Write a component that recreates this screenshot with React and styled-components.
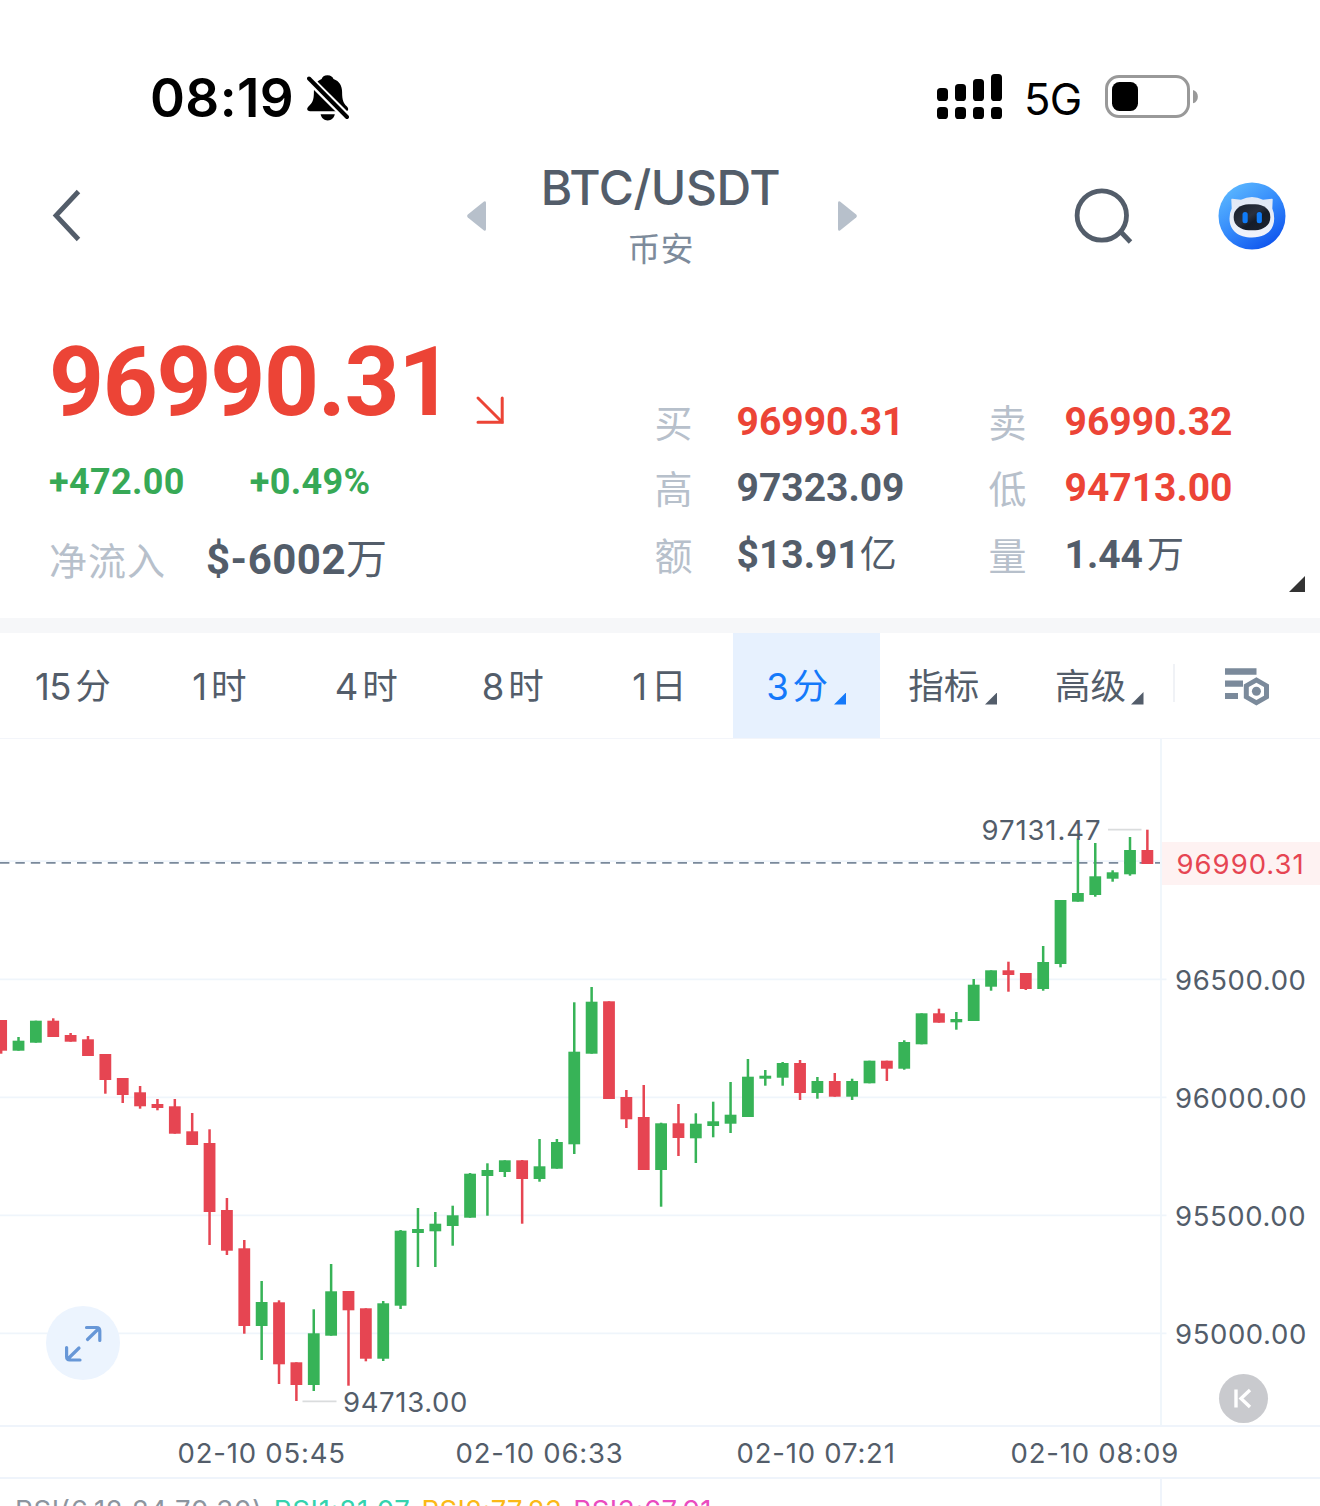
import React from 'react';
import styled, { createGlobalStyle } from 'styled-components';

const ink = '#535d6a';
const muted = '#b7c0cb';
const red = '#ec4436';
const green = '#37a956';
const line = '#eff4fb';
const ui = "Inter, 'Noto Sans CJK SC', sans-serif";
const num = "Roboto, 'Noto Sans CJK SC', sans-serif";

const Global = createGlobalStyle`
  * { box-sizing: border-box; }
  body { margin: 0; background: #fff; overflow: hidden; }
`;

const Screen = styled.main`
  width: 1320px;
  height: 1506px;
  overflow: hidden;
  display: flex;
  flex-direction: column;
  background: #fff;
  color: ${ink};
  font-family: ${ui};
  white-space: nowrap;
`;

const StatusBar = styled.header`
  height: 150px;
  flex: none;
  display: flex;
  justify-content: space-between;
  padding: 66px 121px 0 150px;
  color: #000;
`;
const StatusGroup = styled.div`
  display: flex;
  align-items: center;
  height: ${(p) => p.$height}px;
`;
const Clock = styled.span`
  width: 157px;
  font-size: 53px;
  font-weight: 600;
  letter-spacing: 0.4px;
`;
const Network = styled.span`
  width: 80px;
  padding-left: 22px;
  padding-top: 4px;
  font-size: 43.5px;
  font-weight: 430;
  letter-spacing: -0.7px;
`;

const NavBar = styled.nav`
  height: 140px;
  flex: none;
  display: flex;
  justify-content: space-between;
  padding: 7px 34px 0 50px;
`;
const NavSide = styled.div`
  width: 216px;
  height: 118px;
  display: flex;
  align-items: center;
  justify-content: ${(p) => (p.$end ? 'flex-end' : 'flex-start')};
  gap: 84px;
`;
const PairSwitch = styled.div`
  display: flex;
  align-items: center;
  justify-content: space-between;
  width: 390px;
  height: 118px;
  margin-right: 12px;
`;
const Pair = styled.div`
  padding: 6px 3px 0 0;
  text-align: center;
`;
const PairName = styled.h1`
  margin: 0;
  font-size: 48px;
  line-height: 60px;
  font-weight: 500;
  letter-spacing: -0.4px;
`;
const Exchange = styled.div`
  font-size: 33px;
  line-height: 62px;
  color: #7d8b9b;
`;

const Quote = styled.section`
  height: 328px;
  flex: none;
  display: flex;
  justify-content: space-between;
`;
const QuoteMain = styled.div`
  width: 560px;
  padding: 41px 0 0 49px;
  font-family: ${num};
  font-weight: 700;
`;
const Price = styled.div`
  display: flex;
  height: 102px;
  font-size: 96px;
  line-height: 103px;
  letter-spacing: -1.3px;
  color: ${red};
  svg { margin: 63.500px 0 0 22.5px; }
`;
const Change = styled.div`
  display: flex;
  gap: 65px;
  margin-top: 25px;
  font-size: 36px;
  line-height: 48px;
  letter-spacing: 0.35px;
  color: ${green};
`;
const Inflow = styled.div`
  display: flex;
  align-items: center;
  gap: 40px;
  height: 56px;
  margin-top: 26px;
  font-size: 42px;
  line-height: 56px;
  letter-spacing: 0.5px;
`;
const Label = styled.span`
  font-family: 'Noto Sans CJK SC', sans-serif;
  font-size: 38px;
  line-height: 56px;
  font-weight: 400;
  letter-spacing: ${(p) => p.$track || 0}px;
  margin-top: -2px;
  color: ${muted};
`;
const Unit = styled.span`
  font-size: ${(p) => p.$size}px;
  font-weight: 400;
  margin-left: ${(p) => p.$gap || 0}px;
`;
const Stats = styled.div`
  display: grid;
  grid-template-columns: 82px 252px 76px 1fr;
  grid-auto-rows: 66.6px;
  align-content: start;
  align-items: center;
  width: 635px;
  padding: 98.6px 0 0 0;
  margin-right: 30.5px;
`;
const Stat = styled.span`
  font-family: ${num};
  font-size: 39px;
  line-height: 56px;
  font-weight: 700;
  color: ${(p) => (p.$down ? red : ink)};
`;
const QuoteWrap = styled.div`
  position: relative;
`;
const ExpandCorner = styled.svg`
  position: absolute;
  right: 15px;
  bottom: 26px;
`;
const Divider = styled.div`
  height: 15px;
  flex: none;
  background: #f6f7f9;
`;

const Tabs = styled.div`
  height: 106px;
  flex: none;
  display: flex;
  border-bottom: 1px solid #f3f5fa;
`;
const Tab = styled.button`
  width: 146.67px;
  height: 105px;
  border: 0;
  padding: 2px 1px 0 0;
  display: flex;
  align-items: center;
  justify-content: center;
  font-family: ${ui};
  font-size: 35.5px;
  line-height: 50px;
  color: ${(p) => (p.$active ? '#1479fa' : ink)};
  background: ${(p) => (p.$active ? '#e7f1fe' : 'transparent')};
  svg { margin: 24px 0 0 5.5px; }
`;
const TabDigits = styled.span`
  font-size: 36.5px;
  letter-spacing: -0.6px;
  margin-right: 4.5px;
`;
const TabSettings = styled.button`
  flex: 1;
  border: 0;
  padding: 2px 0 0 51px;
  background: none;
  display: flex;
  align-items: center;
  position: relative;
  &::before {
    content: '';
    position: absolute;
    left: 0;
    top: 31px;
    width: 1.5px;
    height: 38px;
    background: #f0f2f6;
  }
`;

const ChartArea = styled.section`
  position: relative;
  height: 686px;
  flex: none;
  svg { display: block; }
  text { font-family: ${ui}; font-size: 27.5px; }
`;
const RoundButton = styled.button`
  position: absolute;
  left: ${(p) => p.$x}px;
  top: ${(p) => p.$y}px;
  width: ${(p) => p.$size}px;
  height: ${(p) => p.$size}px;
  border: 0;
  padding: 0;
  border-radius: 50%;
  background: ${(p) => p.$bg};
`;

const TimeAxis = styled.div`
  height: 54px;
  flex: none;
  display: grid;
  grid-template-columns: 278px 281px 274px 1fr;
  padding-left: 177.5px;
  border-top: 2px solid ${line};
  border-bottom: 2px solid ${line};
  font-size: 27.5px;
  line-height: 52px;
  letter-spacing: 0.8px;
`;
const Indicator = styled.div`
  height: 27px;
  flex: none;
  display: flex;
  gap: 11px;
  width: 1162px;
  padding: 15px 0 0 15px;
  border-right: 2px solid ${line};
  font-size: 27.5px;
  line-height: 32px;
  letter-spacing: 0.65px;
  overflow: hidden;
`;
const Reading = styled.span`
  color: ${(p) => p.$color};
  letter-spacing: ${(p) => p.$track}px;
`;

/* side, high, body top, body bottom, low */
const candles = [
  ['r', 1020, 1020, 1050.7, 1053.7], ['g', 1037, 1040.7, 1050.7, 1050.7], ['g', 1020.7, 1020.7, 1042.7, 1042.7],
  ['r', 1018.3, 1020.7, 1037, 1037], ['r', 1033, 1035, 1041.7, 1041.7], ['r', 1036, 1039.3, 1056, 1056],
  ['r', 1054, 1054, 1080, 1093.7], ['r', 1078, 1078, 1095, 1103], ['r', 1086, 1092.3, 1106.3, 1108.7],
  ['r', 1099, 1104, 1108, 1110.3], ['r', 1099, 1106.3, 1133.7, 1133.7], ['r', 1113, 1131.3, 1145, 1145],
  ['r', 1129.3, 1143, 1212, 1245], ['r', 1198, 1210, 1250.7, 1255], ['r', 1240, 1248.3, 1326, 1333.7],
  ['g', 1281, 1302, 1326, 1360], ['r', 1300.3, 1302.3, 1364.3, 1384], ['r', 1362.3, 1362.3, 1385, 1401],
  ['g', 1309.3, 1333.3, 1385, 1391], ['g', 1264, 1291.3, 1335.7, 1335.7], ['r', 1291, 1291, 1310.3, 1385.7],
  ['r', 1308.3, 1308.3, 1358.7, 1361.3], ['g', 1301, 1303.3, 1358.7, 1361], ['g', 1230, 1230.7, 1305.7, 1309],
  ['g', 1208, 1229, 1233, 1267], ['g', 1212, 1223.7, 1231.3, 1267], ['g', 1205.7, 1215.3, 1226, 1245.7],
  ['g', 1173, 1173.7, 1217.7, 1217.7], ['g', 1163.3, 1170, 1176, 1215.7], ['g', 1160.3, 1160.3, 1172, 1177],
  ['r', 1160, 1160.3, 1179, 1223.7], ['g', 1139, 1166.3, 1179, 1181.7], ['g', 1139, 1142, 1168.7, 1168.7],
  ['g', 1002.3, 1051.7, 1144.3, 1154], ['g', 987, 1001.7, 1053.7, 1053.7], ['r', 1001.3, 1001.3, 1099, 1099],
  ['r', 1090, 1097, 1119.3, 1128], ['r', 1085, 1117, 1170, 1170], ['g', 1122.7, 1123.3, 1170, 1206.7],
  ['r', 1104, 1123.3, 1138, 1156], ['g', 1113.3, 1123.7, 1138.3, 1163], ['g', 1101.7, 1121.3, 1126, 1137.3],
  ['g', 1082, 1114.7, 1123.7, 1133], ['g', 1059, 1076.7, 1117, 1117], ['g', 1070, 1075.7, 1078.7, 1085.7],
  ['g', 1062, 1063, 1077.7, 1085.7], ['r', 1060, 1063, 1093, 1100], ['g', 1077, 1081, 1093, 1098.7],
  ['r', 1073, 1081, 1096.7, 1096.7], ['g', 1078.7, 1081, 1096.7, 1100], ['g', 1060.7, 1060.7, 1083.3, 1083.3],
  ['r', 1060.7, 1060.7, 1068.7, 1081], ['g', 1040.3, 1042, 1068.7, 1069.7], ['g', 1013.3, 1013.3, 1044.3, 1044.3],
  ['r', 1008.7, 1013.3, 1022.7, 1022.7], ['g', 1012, 1019, 1022.3, 1029.7], ['g', 979, 984.7, 1021, 1021],
  ['g', 970.3, 970.3, 986.7, 990.7], ['r', 961.7, 970.3, 975, 991.7], ['r', 973, 973, 989, 990],
  ['g', 946, 962, 989, 990.7], ['g', 900, 900, 964, 967.3], ['g', 838.3, 893, 901.7, 901.7],
  ['g', 843, 876.3, 895, 896.7], ['g', 870.3, 872.3, 878.7, 881.7], ['g', 837, 850, 874.3, 875.7],
  ['r', 829.7, 850, 864, 864],
];
const gridLines = [
  [979.3, '96500.00'], [1097.4, '96000.00'], [1215.4, '95500.00'], [1333.4, '95000.00'],
];

function Candle({ index, data }) {
  const [side, high, top, bottom, low] = data;
  const x = 1.15 + index * 17.367;
  const fill = side === 'r' ? '#e64552' : '#37b357';
  return (
    <g fill={fill}>
      <rect x={x - 1.25} y={high} width="2.5" height={low - high} />
      <rect x={x - 5.9} y={top} width="11.8" height={bottom - top} />
    </g>
  );
}

function Chart() {
  return (
    <svg width="1320" height="686" viewBox="0 739 1320 686">
      <g stroke="#eff5fb" strokeWidth="1.8">
        <path d="M0 861.2H1160" />
        {gridLines.map(([y]) => <path key={y} d={`M0 ${y}H1166.5`} />)}
        <path d="M1161 739V1425" />
      </g>
      <path d="M0 862.8H1160" stroke="#7a899b" strokeWidth="1.8" strokeDasharray="9.4 6" />
      {candles.map((c, i) => <Candle key={i} index={i} data={c} />)}
      <path d="M1108 829.7H1141.5M302.5 1401.3H336.5" stroke="#dadcdd" strokeWidth="1.8" />
      <text x="981.5" y="840.4" fill={ink} letterSpacing="0.9">97131.47</text>
      <text x="343" y="1411.7" fill={ink} letterSpacing="0.65">94713.00</text>
      <rect x="1162" y="842" width="158" height="43" fill="#fef2f2" />
      <text x="1176.500" y="873.7" fill="#e64552" letterSpacing="1">96990.31</text>
      {gridLines.map(([y, label]) => (
        <text key={y} x="1175" y={y + 10.7} fill={ink} letterSpacing="0.6">{label}</text>
      ))}
    </svg>
  );
}

function MutedBell() {
  return (
    <svg width="42" height="46" viewBox="307 75 42 46">
      <path d="M327.5 75.3c3.4 0 5.3 1.8 6 3.6 6 2 8.600 7 8.600 13 0 8.500 1.600 11.200 4.600 14.300 2.400 2.500 1.800 5-1.300 5H310.200c-3.200 0-4-2.700-1.500-5 3.600-3.400 5.200-6.200 5.200-14.300 0-6.200 2.400-11 7.700-13 .8-1.900 2.500-3.600 5.900-3.600Z" />
      <path d="M320.600 114.200h14.200c-1 4-3.500 6.200-7.100 6.200s-6.100-2.200-7.100-6.200Z" />
      <path d="M305 75L351 121" stroke="#fff" strokeWidth="8.400" />
      <path d="M309 78.500L347 117" stroke="#000" strokeWidth="4" strokeLinecap="round" />
    </svg>
  );
}

function Signal() {
  return (
    <svg width="65" height="46" viewBox="937 74 65 46">
      {[88, 84, 79, 74].map((top, i) => (
        <g key={top}>
          <rect x={937 + i * 18} y={top} width="11" height={101 - top} rx="3.600" />
          <rect x={937 + i * 18} y="107" width="11" height="12" rx="3.600" />
        </g>
      ))}
    </svg>
  );
}

const BatterySvg = styled.svg`
  margin-left: 23px;
`;

function Battery() {
  return (
    <BatterySvg width="94" height="44" viewBox="1105 75 94 44">
      <rect x="1106.500" y="76.500" width="82" height="40" rx="12.500" fill="none" stroke="#999" strokeWidth="3" />
      <rect x="1112" y="82" width="26" height="29" rx="7.500" />
      <path d="M1193 90c6.500 1.800 6.500 11.500 0 13.300Z" fill="#999" />
    </BatterySvg>
  );
}

function Robot() {
  return (
    <svg width="68" height="68" viewBox="1218.500 182.500 68 68">
      <defs>
        <linearGradient id="sky" x1="0.15" y1="0.05" x2="0.8" y2="1">
          <stop offset="0" stopColor="#5cb8ff" />
          <stop offset="0.5" stopColor="#3389fb" />
          <stop offset="1" stopColor="#0c50ec" />
        </linearGradient>
        <linearGradient id="shell" x1="0" y1="0" x2="0" y2="1">
          <stop offset="0" stopColor="#dfe7f5" />
          <stop offset="1" stopColor="#f0f3fb" />
        </linearGradient>
        <linearGradient id="visor" x1="0" y1="0" x2="1" y2="1">
          <stop offset="0" stopColor="#151c29" />
          <stop offset="0.45" stopColor="#2a303e" />
          <stop offset="0.6" stopColor="#151c29" />
          <stop offset="1" stopColor="#1d2431" />
        </linearGradient>
      </defs>
      <circle cx="1252.500" cy="216.500" r="33.500" fill="url(#sky)" />
      <path d="M1231.800 200Q1231.700 199 1232.700 199.200L1241.500 200.300Q1252.500 194.600 1263.500 200.300L1272.300 199.200Q1273.300 199 1273.200 200L1272.800 209Q1274.700 213 1274.700 219C1274.700 231 1266 238 1252.500 238S1230 231 1230 219Q1230 213 1232.200 209Z" fill="url(#shell)" />
      <rect x="1234.200" y="204.700" width="36.600" height="26" rx="15" ry="12.500" fill="url(#visor)" />
      <rect x="1243" y="212.500" width="5.200" height="11.200" rx="2.500" fill="#0f7bf8" />
      <rect x="1257.200" y="212.500" width="5.200" height="11.200" rx="2.500" fill="#0f7bf8" />
    </svg>
  );
}

const Corner = ({ color }) => (
  <svg width="12.5" height="12.500" viewBox="0 0 12 12"><path d="M12 0V12H0Z" fill={color} /></svg>
);

function SettingsIcon() {
  return (
    <svg width="46" height="40" viewBox="1224 667 46 40" fill="#7b8a9b">
      <path d="M1225 668.300h31.500v6.400H1225ZM1225 680.600h18v6.200h-18ZM1225 692.900h13v6.200h-13Z" />
      <path fillRule="evenodd" d="M1256.400 677.300L1269 684.500V698.200L1256.400 705.400L1243.800 698.200V684.500ZM1256.400 682.700L1248.800 687V695.700L1256.400 700L1264 695.700V687Z" />
      <circle cx="1256.400" cy="691.300" r="4.500" />
    </svg>
  );
}

const intervals = [['15', '分'], ['1', '时'], ['4', '时'], ['8', '时'], ['1', '日']];

export default function App() {
  return (
    <Screen>
      <Global />
      <StatusBar>
        <StatusGroup $height={64}><Clock>08:19</Clock><MutedBell /></StatusGroup>
        <StatusGroup $height={62}><Signal /><Network>5G</Network><Battery /></StatusGroup>
      </StatusBar>
      <NavBar>
        <NavSide>
          <svg width="32" height="54" viewBox="50 189 32 54"><path d="M78.500 191.500L56 215.500L78.500 239.500" fill="none" stroke={ink} strokeWidth="4.800" /></svg>
        </NavSide>
        <PairSwitch>
          <svg width="19" height="32" viewBox="0 0 19 32"><path d="M17 1.500Q19 .5 19 3V29Q19 31.500 17 30.500L.8 17.500Q-.5 16 .8 14.500Z" fill={muted} /></svg>
          <Pair>
            <PairName>BTC/USDT</PairName>
            <Exchange>币安</Exchange>
          </Pair>
          <svg width="19" height="32" viewBox="0 0 19 32"><path d="M2 1.500Q0 .5 0 3V29Q0 31.500 2 30.500L18.200 17.500Q19.500 16 18.200 14.500Z" fill={muted} /></svg>
        </PairSwitch>
        <NavSide $end>
          <svg width="60" height="58" viewBox="1075 187 60 58" fill="none" stroke={ink} strokeWidth="4.800">
            <circle cx="1102.800" cy="215.500" r="24.700" /><path d="M1121 231L1131.500 242" />
          </svg>
          <Robot />
        </NavSide>
      </NavBar>
      <QuoteWrap>
        <Quote>
          <QuoteMain>
            <Price>
              96990.31
              <svg width="30" height="30" viewBox="475 395 30 30" fill="none" stroke={red} strokeWidth="3" strokeLinecap="round">
                <path d="M478 398L502 422" /><path d="M502.200 398V422.200H478" />
              </svg>
            </Price>
            <Change><span>+472.00</span><span>+0.49%</span></Change>
            <Inflow><Label $track={1}>净流入</Label><span>$-6002<Unit $size={41}>万</Unit></span></Inflow>
          </QuoteMain>
          <Stats>
            <Label>买</Label><Stat $down>96990.31</Stat><Label>卖</Label><Stat $down>96990.32</Stat>
            <Label>高</Label><Stat>97323.09</Stat><Label>低</Label><Stat $down>94713.00</Stat>
            <Label>额</Label><Stat>$13.91<Unit $size={37}>亿</Unit></Stat><Label>量</Label><Stat>1.44<Unit $size={37} $gap={4}>万</Unit></Stat>
          </Stats>
        </Quote>
        <ExpandCorner width="16" height="16" viewBox="0 0 16 16"><path d="M16 0V16H0Z" fill="#333" /></ExpandCorner>
      </QuoteWrap>
      <Divider />
      <Tabs>
        {intervals.map(([n, u]) => (
          <Tab key={n + u}><TabDigits>{n}</TabDigits>{u}</Tab>
        ))}
        <Tab $active><TabDigits>3</TabDigits>分<Corner color="#1479fa" /></Tab>
        <Tab>指标<Corner color={ink} /></Tab>
        <Tab>高级<Corner color={ink} /></Tab>
        <TabSettings><SettingsIcon /></TabSettings>
      </Tabs>
      <ChartArea>
        <Chart />
        <RoundButton $x={46} $y={567} $size={74} $bg="#ecf4fe">
          <svg width="74" height="74" viewBox="46 1306 74 74" fill="none" stroke="#6797d7" strokeWidth="3.200" strokeLinecap="round" strokeLinejoin="round">
            <path d="M86.500 1327.500H96.500Q99.800 1327.500 99.800 1330.800V1340.500M87.500 1339.500L98.800 1328.500M66.600 1347.500V1356.800Q66.600 1360 69.800 1360H80M79 1348L67.800 1359" />
          </svg>
        </RoundButton>
        <RoundButton $x={1219} $y={634.5} $size={49} $bg="#c9cace">
          <svg width="49" height="49" viewBox="0 0 49 49" fill="none" stroke="#fff" strokeWidth="3.400">
            <path d="M17 15.500V33.500M31 16L22 24.500L31 33" />
          </svg>
        </RoundButton>
      </ChartArea>
      <TimeAxis>
        <span>02-10 05:45</span><span>02-10 06:33</span><span>02-10 07:21</span><span>02-10 08:09</span>
      </TimeAxis>
      <Indicator>
        <Reading $color="#8d959f" $track={0.75}>RSI(6,12,24,70,30)</Reading>
        <Reading $color="#35d3ae" $track={0.7}>RSI1:81.07</Reading>
        <Reading $color="#fbb917" $track={0.35}>RSI2:77.23</Reading>
        <Reading $color="#ea4bc0" $track={0.6}>RSI3:67.91</Reading>
      </Indicator>
    </Screen>
  );
}
